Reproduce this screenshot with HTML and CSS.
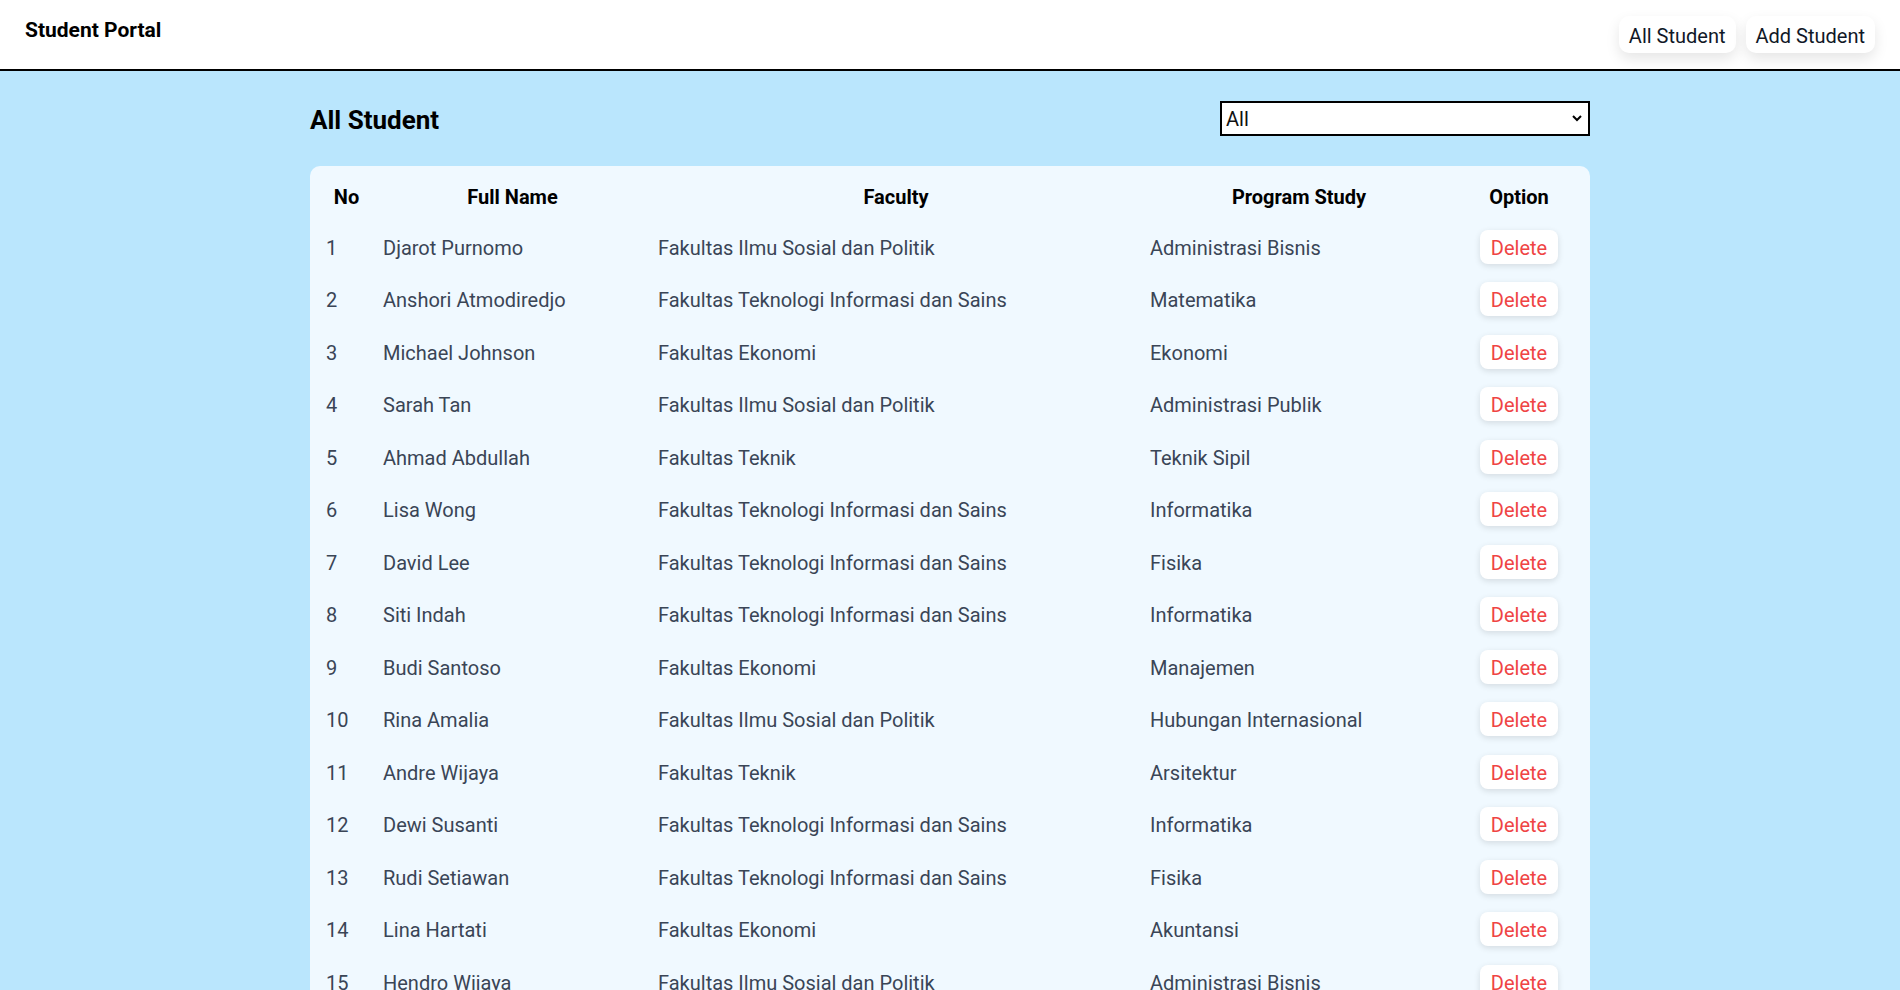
FILE: index.html
```html
<!DOCTYPE html>
<html lang="en">
<head>
<meta charset="utf-8">
<title>Student Portal</title>
<link rel="stylesheet" href="styles.css">
</head>
<body>
<header class="topbar">
  <div class="brand">Student Portal</div>
  <nav class="nav">
    <button class="nav-btn">All Student</button>
    <button class="nav-btn">Add Student</button>
  </nav>
</header>
<main class="main">
  <div class="toolbar">
    <h1 class="title">All Student</h1>
    <div class="select-wrap">
      <select class="select">
        <option>All</option>
      </select>
      <svg class="chev" viewBox="0 0 10 7" width="10" height="7"><path d="M1 1 L5 5 L9 1" fill="none" stroke="#000" stroke-width="2"/></svg>
    </div>
  </div>
  <section class="card">
    <table class="students">
      <colgroup>
        <col class="c-no"><col class="c-name"><col class="c-fac"><col class="c-prog"><col class="c-opt">
      </colgroup>
      <thead>
        <tr><th>No</th><th>Full Name</th><th>Faculty</th><th>Program Study</th><th>Option</th></tr>
      </thead>
      <tbody>
        <tr><td>1</td><td>Djarot Purnomo</td><td>Fakultas Ilmu Sosial dan Politik</td><td>Administrasi Bisnis</td><td class="opt"><button class="del">Delete</button></td></tr>
        <tr><td>2</td><td>Anshori Atmodiredjo</td><td>Fakultas Teknologi Informasi dan Sains</td><td>Matematika</td><td class="opt"><button class="del">Delete</button></td></tr>
        <tr><td>3</td><td>Michael Johnson</td><td>Fakultas Ekonomi</td><td>Ekonomi</td><td class="opt"><button class="del">Delete</button></td></tr>
        <tr><td>4</td><td>Sarah Tan</td><td>Fakultas Ilmu Sosial dan Politik</td><td>Administrasi Publik</td><td class="opt"><button class="del">Delete</button></td></tr>
        <tr><td>5</td><td>Ahmad Abdullah</td><td>Fakultas Teknik</td><td>Teknik Sipil</td><td class="opt"><button class="del">Delete</button></td></tr>
        <tr><td>6</td><td>Lisa Wong</td><td>Fakultas Teknologi Informasi dan Sains</td><td>Informatika</td><td class="opt"><button class="del">Delete</button></td></tr>
        <tr><td>7</td><td>David Lee</td><td>Fakultas Teknologi Informasi dan Sains</td><td>Fisika</td><td class="opt"><button class="del">Delete</button></td></tr>
        <tr><td>8</td><td>Siti Indah</td><td>Fakultas Teknologi Informasi dan Sains</td><td>Informatika</td><td class="opt"><button class="del">Delete</button></td></tr>
        <tr><td>9</td><td>Budi Santoso</td><td>Fakultas Ekonomi</td><td>Manajemen</td><td class="opt"><button class="del">Delete</button></td></tr>
        <tr><td>10</td><td>Rina Amalia</td><td>Fakultas Ilmu Sosial dan Politik</td><td>Hubungan Internasional</td><td class="opt"><button class="del">Delete</button></td></tr>
        <tr><td>11</td><td>Andre Wijaya</td><td>Fakultas Teknik</td><td>Arsitektur</td><td class="opt"><button class="del">Delete</button></td></tr>
        <tr><td>12</td><td>Dewi Susanti</td><td>Fakultas Teknologi Informasi dan Sains</td><td>Informatika</td><td class="opt"><button class="del">Delete</button></td></tr>
        <tr><td>13</td><td>Rudi Setiawan</td><td>Fakultas Teknologi Informasi dan Sains</td><td>Fisika</td><td class="opt"><button class="del">Delete</button></td></tr>
        <tr><td>14</td><td>Lina Hartati</td><td>Fakultas Ekonomi</td><td>Akuntansi</td><td class="opt"><button class="del">Delete</button></td></tr>
        <tr><td>15</td><td>Hendro Wijaya</td><td>Fakultas Ilmu Sosial dan Politik</td><td>Administrasi Bisnis</td><td class="opt"><button class="del">Delete</button></td></tr>
      </tbody>
    </table>
  </section>
</main>
</body>
</html>
```

FILE: styles.css
```css
* { box-sizing: border-box; }

html { scrollbar-width: none; }
html::-webkit-scrollbar { display: none; }

body {
  margin: 0;
  background: #bae6fd;
  font-family: Roboto, "Liberation Sans", sans-serif;
  color: #000;
}

.topbar {
  height: 71px;
  background: #fff;
  border-bottom: 2px solid #000;
  display: flex;
  justify-content: space-between;
  align-items: flex-start;
  padding: 0 25px 0 25px;
}

.brand {
  margin-top: 18px;
  font-size: 21px;
  line-height: 25px;
  font-weight: 700;
}

.nav {
  display: flex;
  gap: 10px;
  margin-top: 16px;
}

.nav-btn {
  font-family: Roboto, "Liberation Sans", sans-serif;
  font-size: 20px;
  line-height: 24px;
  padding: 8px 10px 5px;
  background: #fff;
  border: none;
  border-radius: 10px;
  box-shadow: 0 6px 14px rgba(0, 0, 0, 0.1);
  color: #111827;
}

.main {
  width: 1280px;
  margin: 0 auto;
}

.toolbar {
  display: flex;
  justify-content: space-between;
  align-items: center;
  margin-top: 30px;
  height: 35px;
}

.title {
  font-size: 26px;
  font-weight: 700;
  margin: 3px 0 0;
  line-height: normal;
}

.select-wrap {
  position: relative;
  width: 370px;
  height: 35px;
}

.select {
  appearance: none;
  -webkit-appearance: none;
  width: 100%;
  height: 100%;
  border: 2px solid #000;
  border-radius: 0;
  background: #fff;
  font-family: Roboto, "Liberation Sans", sans-serif;
  font-size: 20px;
  padding: 0 30px 0 4px;
  color: #111;
}

.chev {
  position: absolute;
  right: 8px;
  top: 14px;
  width: 10px;
  height: 7px;
  pointer-events: none;
}

.card {
  margin-top: 30px;
  background: #f0f9ff;
  border-radius: 10px;
  padding: 8px;
}

.students {
  width: 100%;
  border-collapse: collapse;
  table-layout: fixed;
}

.c-no { width: 57px; }
.c-name { width: 275px; }
.c-fac { width: 492px; }
.c-prog { width: 314px; }
.c-opt { width: 126px; }

.students thead tr { height: 46.5px; }
.students tbody tr { height: 52.5px; }

.students th {
  font-size: 20px;
  font-weight: 700;
  text-align: center;
  padding: 0 8px;
  color: #000;
}

.students td {
  font-size: 20px;
  color: #3a4556;
  padding: 2px 8px 0;
  vertical-align: middle;
  white-space: nowrap;
}

.students td.opt {
  text-align: center;
  padding: 0 8px;
}

.del {
  font-family: Roboto, "Liberation Sans", sans-serif;
  font-size: 20px;
  line-height: 24px;
  color: #ef4444;
  background: #fff;
  border: none;
  border-radius: 8px;
  padding: 6px 11px 4px;
  box-shadow: 0 2px 6px rgba(0, 0, 0, 0.12);
}
```
